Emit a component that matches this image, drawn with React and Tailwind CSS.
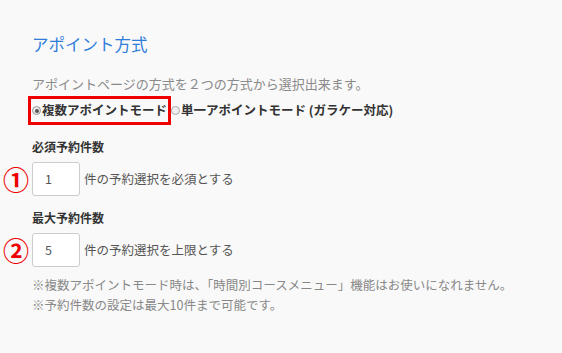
export default function App() {
  const font = { fontFamily: '"Noto Sans CJK JP", "Liberation Sans", sans-serif' };
  return (
    <div className="w-[562px] h-[353px] bg-[#f9f9f9] overflow-hidden" style={font}>
      <div className="pl-[32px] pt-[32px]">
        <h2 className="text-[16.5px] leading-[24px] text-[#2f7ddb]">アポイント方式</h2>
        <p className="mt-[19px] text-[13px] leading-[18px] text-[#8a8a8a]">アポイントページの方式を２つの方式から選択出来ます。</p>
        <div className="flex items-center mt-[3px] -ml-[4px] text-[12.5px] font-bold text-[#333]">
          <label className="flex items-center h-[29px] border-[3px] border-[#ee0000] pl-[1px] pr-[1px]">
            <span className="w-[9px] h-[9px] rounded-full border border-[#999] bg-[#e8e8e8] flex items-center justify-center mr-[1px]">
              <span className="w-[4px] h-[4px] rounded-full bg-[#555]" />
            </span>
            複数アポイントモード
          </label>
          <label className="flex items-center h-[29px]">
            <span className="w-[9px] h-[9px] rounded-full border border-[#aaa] bg-[#eee] mr-[1px]" />
            単一アポイントモード (ガラケー対応)
          </label>
        </div>
        <h3 className="mt-[13px] text-[12px] leading-[18px] font-bold text-[#333]">必須予約件数</h3>
        <div className="flex items-center mt-[6px] -ml-[28px]">
          <span className="w-[27px] text-[26px] leading-[28px] text-[#ee0000] font-bold -ml-[1px]">①</span>
          <div className="ml-[2px] w-[48px] h-[34px] bg-white border border-[#ccc] rounded-[3px] flex items-center pl-[12px] text-[12.5px] text-[#555]">1</div>
          <span className="ml-[4px] text-[12.5px] text-[#555]">件の予約選択を必須とする</span>
        </div>
        <h3 className="mt-[13px] text-[12px] leading-[18px] font-bold text-[#333]">最大予約件数</h3>
        <div className="flex items-center mt-[6px] -ml-[28px]">
          <span className="w-[27px] text-[26px] leading-[28px] text-[#ee0000] font-bold -ml-[1px]">②</span>
          <div className="ml-[2px] w-[48px] h-[34px] bg-white border border-[#ccc] rounded-[3px] flex items-center pl-[12px] text-[12.5px] text-[#555]">5</div>
          <span className="ml-[4px] text-[12.5px] text-[#555]">件の予約選択を上限とする</span>
        </div>
        <div className="mt-[8px] text-[12.5px] leading-[20px] text-[#888]">
          <p>※複数アポイントモード時は、「時間別コースメニュー」機能はお使いになれません。</p>
          <p>※予約件数の設定は最大10件まで可能です。</p>
        </div>
      </div>
    </div>
  );
}
